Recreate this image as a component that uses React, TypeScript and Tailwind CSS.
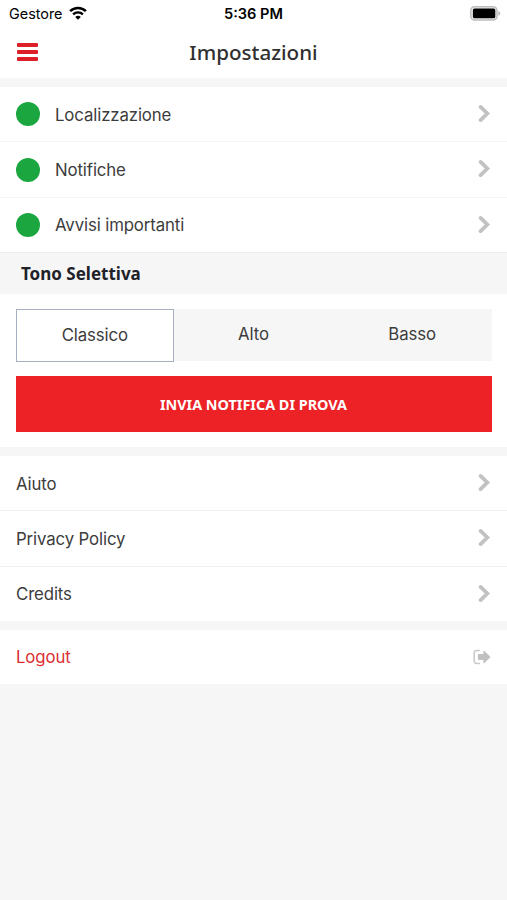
import clsx from "clsx";

interface RowProps {
  label: string;
  active?: boolean;
}

const alerts = ["Localizzazione", "Notifiche", "Avvisi importanti"];
const links = ["Aiuto", "Privacy Policy", "Credits"];
const tones = ["Classico", "Alto", "Basso"];

function Chevron() {
  return (
    <svg width="13" height="19" viewBox="0 0 13 19" fill="none" className="-mt-0.5">
      <path
        d="M2.6 2.9 9.3 9.5l-6.7 6.6"
        stroke="#c2c2c2"
        strokeWidth="3.8"
        strokeLinecap="round"
      />
    </svg>
  );
}

function LogoutIcon() {
  return (
    <svg width="18" height="16" viewBox="0 0 18 16" fill="none">
      <path
        d="M6.3 1.6H3.6A2.4 2.4 0 0 0 1.2 4v8a2.4 2.4 0 0 0 2.4 2.4h2.7"
        stroke="#c8c8c8"
        strokeWidth="1.5"
        strokeLinecap="round"
      />
      <path
        d="M5.6 5.1h4.8V2.4c0-.6.6-.8 1-.4l5.7 5.5c.3.3.3.8 0 1.1l-5.7 5.5c-.4.4-1 .2-1-.4v-2.7H5.6c-.4 0-.7-.3-.7-.7V5.8c0-.4.3-.7.7-.7z"
        fill="#c0c0c0"
      />
    </svg>
  );
}

function StatusBar() {
  return (
    <div className="grid h-7 grid-cols-[1fr_auto_1fr] items-center pl-[9px] pr-[6px] tracking-normal text-black">
      <div className="flex items-center gap-[6px]">
        <span className="text-[14.4px]">Gestore</span>
        <svg width="18" height="14" viewBox="0 0 18 14" fill="none" className="-mt-0.5">
          <path d="M1.1 5.2a11.2 11.2 0 0 1 15.8 0" stroke="#000" strokeWidth="2.6" />
          <path d="M4.1 8.4a6.9 6.9 0 0 1 9.8 0" stroke="#000" strokeWidth="2.3" />
          <path d="M9 13.8 6.2 11a4 4 0 0 1 5.6 0z" fill="#000" />
        </svg>
      </div>
      <span className="mr-[3px] pt-px text-[14.6px] font-semibold">5:36 PM</span>
      <svg width="31" height="15" viewBox="0 0 31 15" className="-mt-0.5 justify-self-end">
        <rect x=".8" y=".7" width="26.2" height="13.4" rx="3.8" fill="#eee" stroke="#bdbdbd" strokeWidth="1.5" />
        <rect x="2.9" y="2.5" width="22.4" height="9.8" rx="1.6" fill="#000" />
        <path d="M28.4 5.1c2.4.8 2.4 3.8 0 4.6z" fill="#b5b5b5" />
      </svg>
    </div>
  );
}

function Row({ label, active }: RowProps) {
  return (
    <li className="flex h-[55.4px] items-center justify-between px-4 last:h-[54.6px]">
      <div className="flex items-center">
        {active && <span className="mr-[15px] size-6 rounded-full bg-[#1ba640]" />}
        <span className="pt-0.5">{label}</span>
      </div>
      <Chevron />
    </li>
  );
}

export default function App() {
  return (
    <div className="h-[900px] w-[507px] overflow-hidden bg-[#f6f6f6] font-['Inter',sans-serif] text-[16.8px] tracking-[-0.007em] text-[#3c3c3c]">
      <header className="h-[78px] bg-white">
        <StatusBar />
        <div className="grid h-12 grid-cols-[1fr_auto_1fr] items-center px-[17px]">
          <button aria-label="Menu" className="flex w-[21px] flex-col gap-[3.5px]">
            <span className="h-[3.5px] rounded-[1px] bg-[#dc1f28]" />
            <span className="h-[3.5px] rounded-[1px] bg-[#dc1f28]" />
            <span className="h-[3.5px] rounded-[1px] bg-[#dc1f28]" />
          </button>
          <h1 className="font-['Noto_Sans',sans-serif] text-[20.6px] font-medium tracking-normal text-[#303030]">
            Impostazioni
          </h1>
        </div>
      </header>

      <ul className="mt-[9px] divide-y divide-[#f4f4f4] bg-white">
        {alerts.map((label) => (
          <Row key={label} label={label} active />
        ))}
      </ul>

      <h2 className="flex h-[41.6px] items-center border-t border-[#eeeeee] pl-[21px] font-['Noto_Sans',sans-serif] text-[17px] font-bold tracking-normal text-[#1f2229]">
        Tono Selettiva
      </h2>

      <section className="h-[153px] bg-white px-[15.5px] pt-[15px]">
        <div className="grid h-[52px] grid-cols-3 bg-[#f6f6f7]">
          {tones.map((tone, i) => (
            <button
              key={tone}
              className={clsx(
                "text-center",
                i === 0 ? "-mb-px border border-[#a9afc3] bg-white pt-px" : "pb-0"
              )}
            >
              {tone}
            </button>
          ))}
        </div>
        <button className="mt-[15px] h-14 w-full bg-[#ec2227] pt-px font-['Noto_Sans',sans-serif] text-[14.4px] font-bold tracking-normal text-white">
          INVIA NOTIFICA DI PROVA
        </button>
      </section>

      <ul className="mt-[9px] divide-y divide-[#f2f2f2] bg-white">
        {links.map((label) => (
          <Row key={label} label={label} />
        ))}
      </ul>

      <div className="mt-[8.6px] flex h-[54px] items-center justify-between bg-white px-4">
        <span className="pt-px text-[#dc2f33]">Logout</span>
        <LogoutIcon />
      </div>
    </div>
  );
}
